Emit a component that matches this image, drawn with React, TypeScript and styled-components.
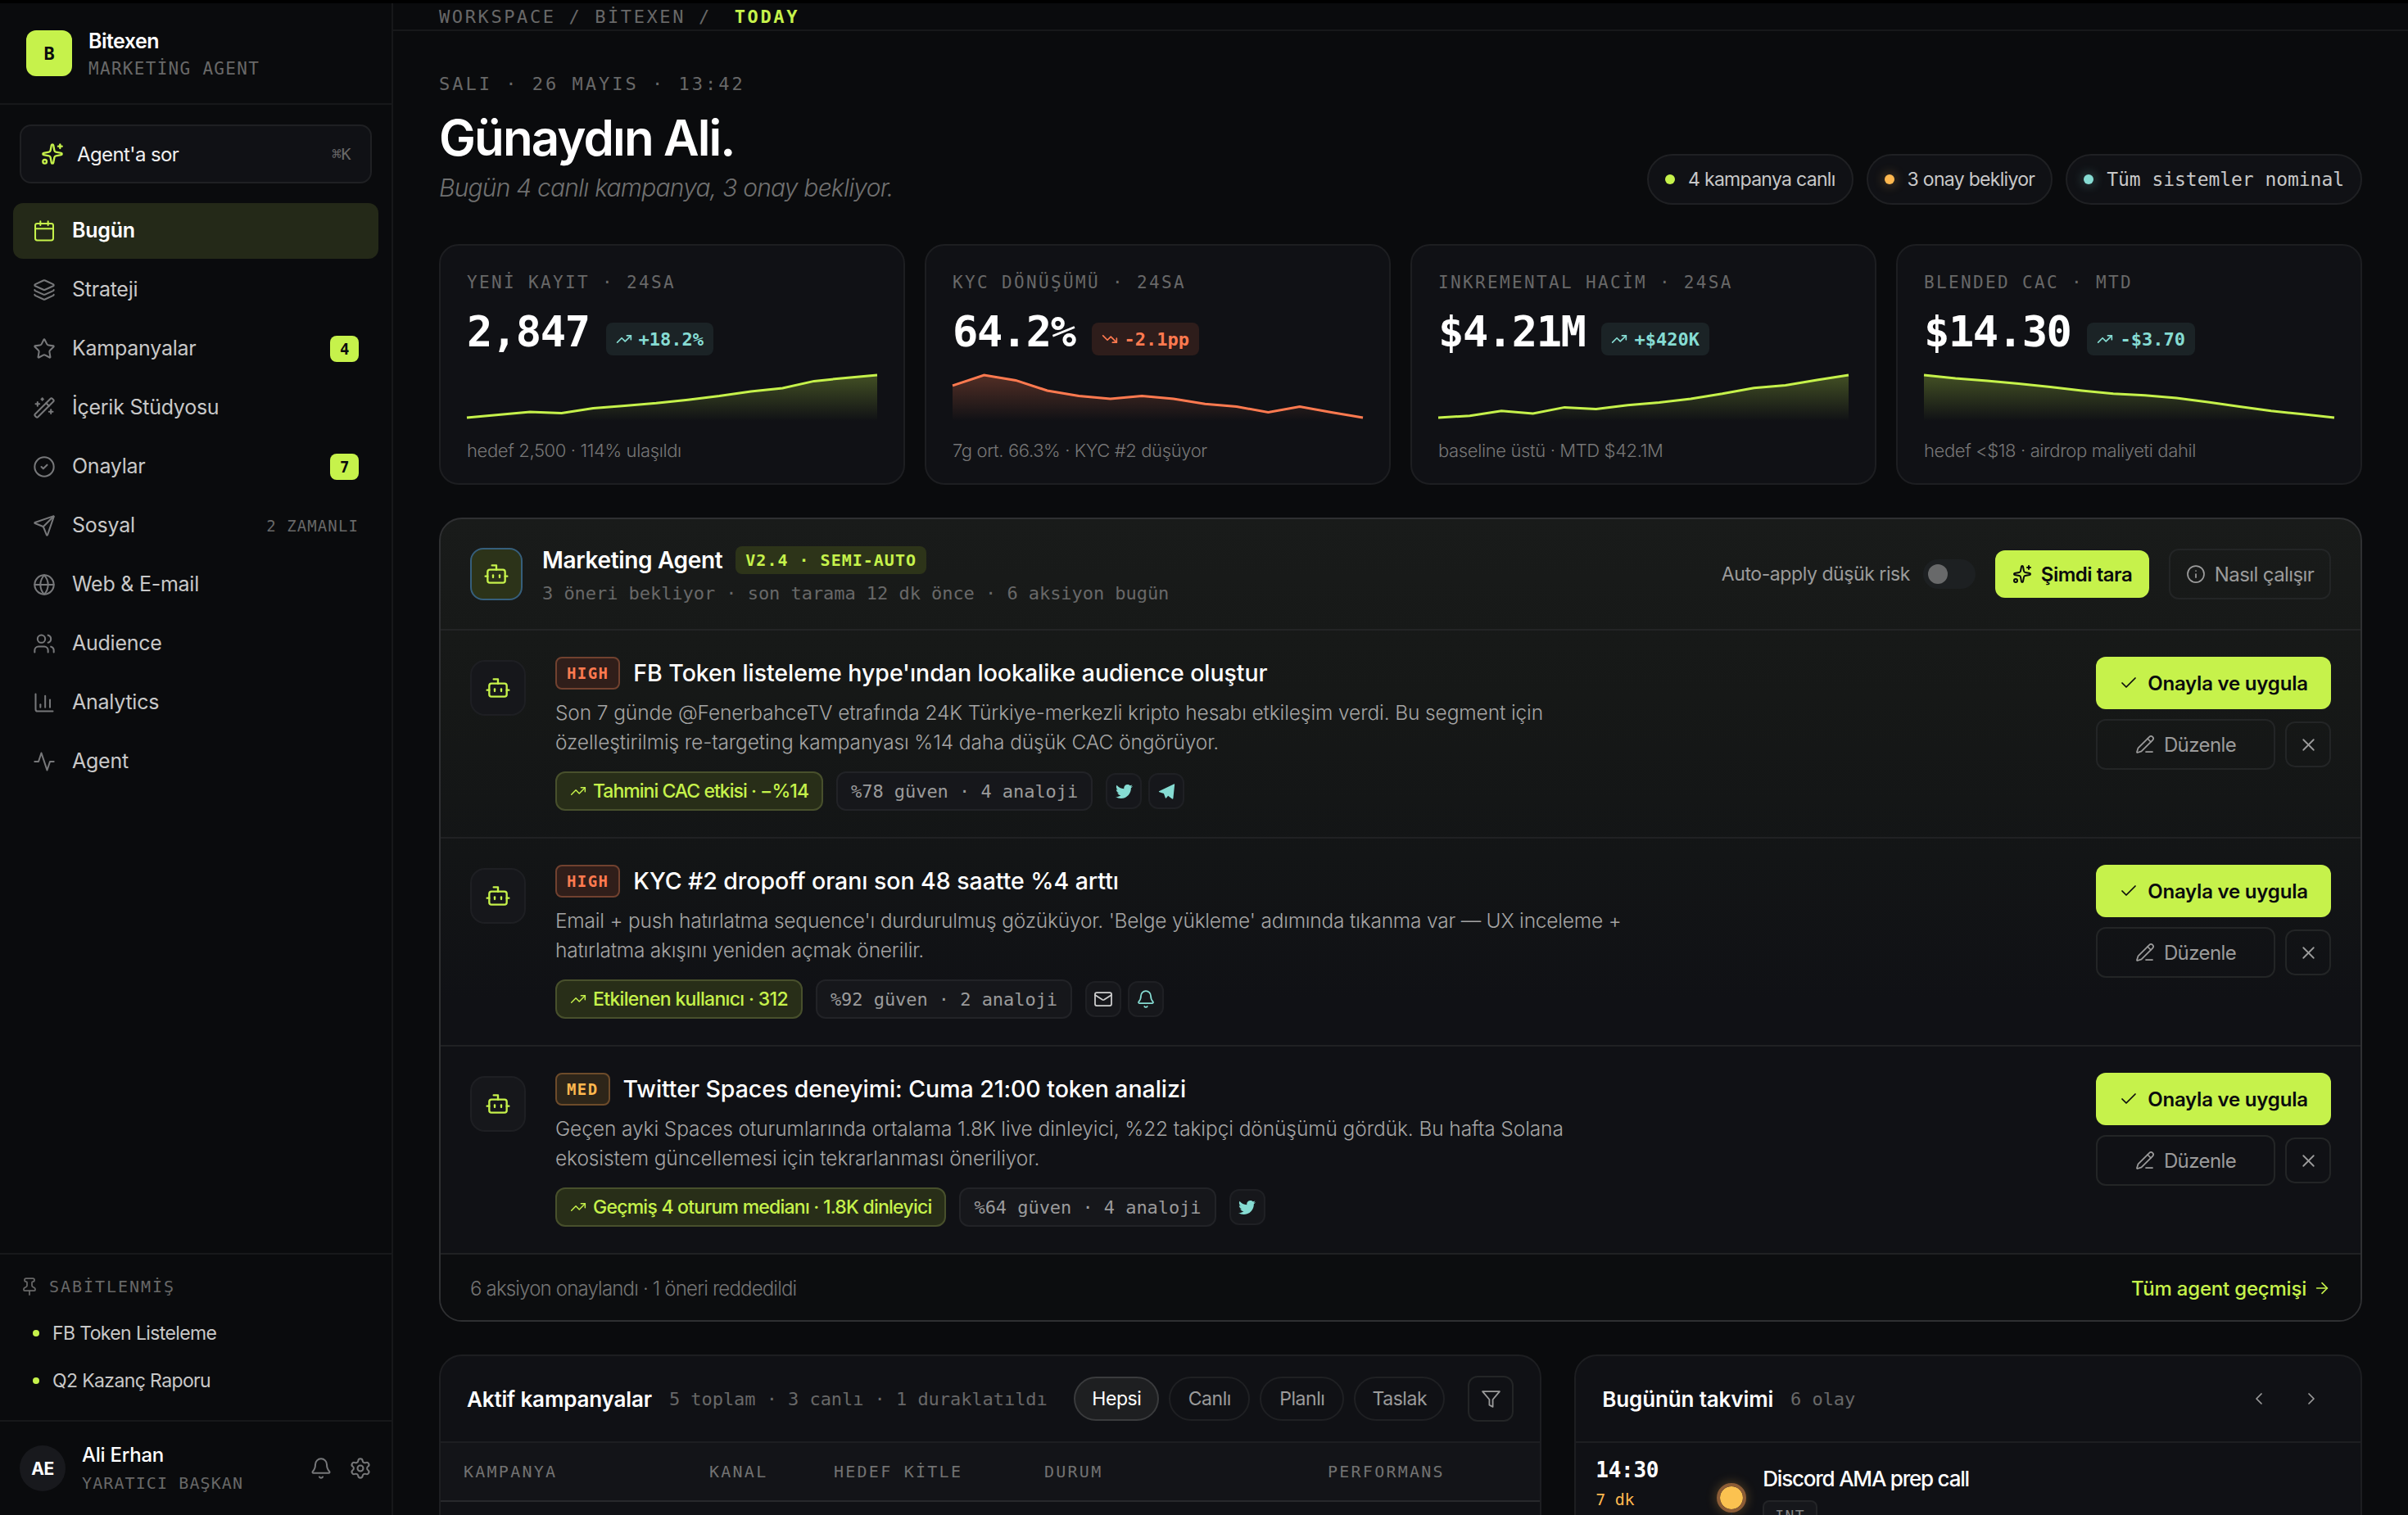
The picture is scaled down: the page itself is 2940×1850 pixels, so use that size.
import React from 'react';
import styled, { createGlobalStyle, css } from 'styled-components';
import {
  ArrowRight,
  Bell,
  Bot,
  ChartColumn,
  Check,
  ChevronLeft,
  ChevronRight,
  CircleCheck,
  Globe,
  Info,
  Layers,
  Mail,
  PencilLine,
  Pin,
  Send,
  Settings,
  Sparkles,
  Star,
  TrendingDown,
  TrendingUp,
  Users,
  WandSparkles,
  X,
} from 'lucide-react';
import { FaTwitter } from 'react-icons/fa';

const c = {
  bg: '#0a0b0d',
  surface: '#101115',
  raised: '#16171b',
  line: '#1d1e21',
  lineStrong: '#2f3032',
  lime: '#c6f24b',
  teal: '#86dcd3',
  orange: '#ff7a50',
  amber: '#ffb84f',
  text: '#ffffff',
  text2: '#c8c8c8',
  text3: '#9b9b9b',
  text4: '#686868',
};

const sans = `Inter, 'Liberation Sans', sans-serif`;
const mono = `'DejaVu Sans Mono', 'Liberation Mono', monospace`;

const GlobalStyle = createGlobalStyle`
  * { box-sizing: border-box; }
  html, body { margin: 0; background: #000; }
  body {
    font-family: ${sans};
    color: ${c.text};
    font-size: 24px;
    overflow: hidden;
  }
  button { font: inherit; color: inherit; margin: 0; padding: 0; border: 0; background: none; }
  svg { display: block; flex: none; }
`;

/* ---------- shell ---------- */

const Shell = styled.div`
  display: flex;
  height: 1850px;
  border-top: 4px solid #000;
  background: ${c.bg};
  overflow: hidden;
`;

const Sidebar = styled.aside`
  display: flex;
  flex-direction: column;
  flex: none;
  width: 480px;
  border-right: 2px solid #17181a;
`;

const Brand = styled.div`
  display: flex;
  align-items: center;
  gap: 20px;
  height: 124px;
  padding: 0 32px;
  border-bottom: 2px solid #17181a;
`;

const Logo = styled.div`
  display: grid;
  place-items: center;
  width: 56px;
  height: 56px;
  border-radius: 12px;
  background: ${c.lime};
  color: #0a0b0d;
  font: 700 22px ${mono};
`;

const Stack = styled.div<{ $top?: number }>`
  display: flex;
  flex-direction: column;
  padding-top: ${p => p.$top ?? 0}px;
  white-space: nowrap;
`;

const BrandName = styled.div`
  font-size: 25px;
  font-weight: 600;
  line-height: 34px;
  letter-spacing: -0.02em;
`;

const Caption = styled.div<{ $size?: number; $ls?: number }>`
  font-family: ${mono};
  font-size: ${p => p.$size ?? 21}px;
  line-height: 34px;
  letter-spacing: ${p => p.$ls ?? 1.3}px;
  color: ${c.text4};
  white-space: nowrap;
`;

const AskButton = styled.button`
  display: flex;
  align-items: center;
  gap: 16px;
  height: 72px;
  margin: 24px 24px 24px;
  padding: 0 24px;
  border: 2px solid #1f2023;
  border-radius: 14px;
  background: ${c.surface};
  font-size: 24px;
  letter-spacing: -0.6px;
  color: #f0f0f0;

  svg { color: ${c.lime}; }
  kbd {
    margin-left: auto;
    font: 20px ${mono};
    color: ${c.text4};
  }
`;

const Nav = styled.nav`
  display: flex;
  flex-direction: column;
  gap: 4px;
  padding: 0 16px;
`;

const NavItem = styled.a<{ $active?: boolean }>`
  display: flex;
  align-items: center;
  gap: 20px;
  height: 68px;
  padding: 0 24px;
  border-radius: 12px;
  font-size: 25px;
  line-height: 30px;
  letter-spacing: -0.01em;
  color: ${c.text2};

  svg { color: #77787a; }

  ${p => p.$active && css`
    background: #242918;
    color: ${c.text};
    font-weight: 600;
    svg { color: ${c.lime}; }
  `}
`;

const NavLabel = styled.span`
  padding-bottom: 2px;
`;

const NavCount = styled.span`
  display: grid;
  place-items: center;
  width: 35px;
  height: 32px;
  margin-left: auto;
  border-radius: 8px;
  background: ${c.lime};
  color: #0a0b0d;
  font: 700 19px ${mono};
`;

const NavHint = styled.span`
  margin-left: auto;
  font: 19px ${mono};
  letter-spacing: 1.1px;
  color: ${c.text4};
`;

const Pinned = styled.div`
  margin-top: auto;
  padding: 24px 28px 20px;
  border-top: 2px solid #17181a;
`;

const PinnedTitle = styled.div`
  display: flex;
  align-items: center;
  gap: 12px;
  height: 30px;
  margin: 0 0 12px -4px;
  color: ${c.text4};
`;

const PinnedItem = styled.a`
  display: flex;
  align-items: center;
  gap: 16px;
  height: 58px;
  padding: 1px 0 0 12px;
  font-size: 23px;
  letter-spacing: -0.62px;
  color: ${c.text2};

  &::before {
    content: '';
    width: 8px;
    height: 8px;
    border-radius: 50%;
    background: ${c.lime};
  }
`;

const UserBar = styled.div`
  display: flex;
  align-items: center;
  height: 116px;
  padding: 0 24px;
  border-top: 2px solid #17181a;
`;

const Avatar = styled.div`
  display: grid;
  place-items: center;
  width: 56px;
  height: 56px;
  margin-right: 20px;
  border-radius: 50%;
  background: #18191d;
  font-size: 21px;
  font-weight: 700;
  letter-spacing: -0.02em;
`;

const UserName = styled.div`
  font-size: 24px;
  font-weight: 500;
  line-height: 34px;
  letter-spacing: -0.01em;
`;

const UserActions = styled.div`
  display: flex;
  gap: 20px;
  margin-left: auto;
  color: #77787a;
`;

/* ---------- main ---------- */

const Main = styled.main`
  flex: 1;
  min-width: 0;
`;

const Topbar = styled.div`
  display: flex;
  align-items: center;
  height: 34px;
  padding: 0 56px;
  border-bottom: 2px solid #17181a;
  font: 22px ${mono};
  letter-spacing: 2.6px;
  white-space: pre;
  color: ${c.text4};

  b {
    margin-left: 28px;
    color: ${c.lime};
  }
`;

const Content = styled.div`
  padding: 50px 56px 0;
`;

const Hero = styled.header`
  display: flex;
  align-items: flex-end;
  justify-content: space-between;
  height: 162px;
`;

const HeroDate = styled.div`
  font: 22px/30px ${mono};
  letter-spacing: 3px;
  color: ${c.text4};
`;

const Greeting = styled.h1`
  margin: 14px 0 4px;
  font-size: 60px;
  font-weight: 600;
  line-height: 72px;
  letter-spacing: -1.9px;
`;

const HeroSub = styled.div`
  font-size: 30px;
  font-style: italic;
  font-weight: 300;
  line-height: 42px;
  letter-spacing: -0.8px;
  color: #707070;
`;

const Pills = styled.div`
  display: flex;
  gap: 16px;
`;

const Pill = styled.div<{ $color: string; $mono?: boolean; $glow?: boolean }>`
  display: flex;
  align-items: center;
  gap: 16px;
  height: 62px;
  padding: 0 20px;
  border: 2px solid #1f2023;
  border-radius: 31px;
  background: ${c.surface};
  font-family: ${p => (p.$mono ? mono : sans)};
  font-size: 23px;
  letter-spacing: ${p => (p.$mono ? -0.05 : -0.7)}px;
  color: ${c.text2};
  white-space: nowrap;

  &::before {
    content: '';
    width: 12px;
    height: 12px;
    border-radius: 50%;
    background: ${p => p.$color};
    box-shadow: ${p => (p.$glow ? `0 0 14px 1px ${p.$color}55` : 'none')};
  }
`;

const KpiGrid = styled.section`
  display: grid;
  grid-template-columns: repeat(4, 1fr);
  gap: 24px;
  margin-top: 48px;
`;

const KpiCard = styled.article`
  height: 294px;
  padding: 32px 32px 0;
  border: 2px solid ${c.line};
  border-radius: 24px;
  background: ${c.surface};
`;

const KpiLabel = styled.div`
  padding-top: 1px;
  font: 21px/24px ${mono};
  letter-spacing: 2.35px;
  color: ${c.text4};
`;

const KpiRow = styled.div`
  display: flex;
  align-items: flex-end;
  gap: 20px;
  height: 58px;
  margin-top: 19px;
`;

const KpiValue = styled.div`
  font: 700 52px/58px ${mono};
  letter-spacing: -1.4px;
`;

const Delta = styled.div<{ $down?: boolean }>`
  display: flex;
  align-items: center;
  gap: 8px;
  height: 40px;
  padding: 0 12px;
  border-radius: 8px;
  background: ${p => (p.$down ? '#2e1d1b' : '#1b2326')};
  color: ${p => (p.$down ? c.orange : c.teal)};
  font: 700 22px ${mono};
`;

const SparkSvg = styled.svg`
  width: 100%;
  height: 60px;
  margin-top: 20px;
  overflow: visible;
`;

const KpiNote = styled.div`
  margin-top: 24px;
  font-size: 22px;
  font-weight: 300;
  line-height: 24px;
  letter-spacing: -0.37px;
  color: #777;
`;

/* ---------- agent panel ---------- */

const AgentPanel = styled.section`
  margin-top: 40px;
  border: 2px solid ${c.lineStrong};
  border-radius: 28px;
  background: linear-gradient(180deg, #191b1a 0%, #161817 22%, #131516 42%, ${c.surface} 60%);
  overflow: hidden;
`;

const AgentHead = styled.header`
  display: flex;
  align-items: center;
  height: 136px;
  padding: 0 36px;
  border-bottom: 2px solid #232425;
`;

const AgentMark = styled.div`
  display: grid;
  place-items: center;
  width: 64px;
  height: 64px;
  margin-right: 24px;
  border: 2px solid #365f7c;
  border-radius: 16px;
  background: #2c3319;
  color: ${c.lime};
`;

const AgentTitle = styled.div`
  display: flex;
  align-items: center;
  gap: 16px;
  height: 36px;
  font-size: 28px;
  font-weight: 600;
  letter-spacing: -0.33px;
`;

const Version = styled.span`
  display: flex;
  align-items: center;
  height: 34px;
  padding: 0 12px;
  border-radius: 8px;
  background: #2d3419;
  color: ${c.lime};
  font: 700 20px ${mono};
  letter-spacing: 1px;
`;

const AgentMeta = styled.div`
  margin-top: 5px;
  font: 22px/36px ${mono};
  letter-spacing: -0.05px;
  color: ${c.text4};
`;

const AgentTools = styled.div`
  display: flex;
  align-items: center;
  gap: 24px;
  margin-left: auto;
`;

const ToggleLabel = styled.label`
  display: flex;
  align-items: center;
  gap: 16px;
  font-size: 23px;
  letter-spacing: -0.43px;
  color: ${c.text3};
`;

const Toggle = styled.span`
  display: flex;
  align-items: center;
  width: 64px;
  height: 36px;
  padding: 0 6px;
  border-radius: 18px;
  background: #1d2022;

  &::before {
    content: '';
    width: 24px;
    height: 24px;
    border-radius: 50%;
    background: #68696a;
  }
`;

const Button = styled.button<{ $primary?: boolean; $w: number; $h: number; $ls?: number }>`
  display: flex;
  align-items: center;
  justify-content: center;
  gap: 11px;
  width: ${p => p.$w}px;
  height: ${p => p.$h}px;
  border-radius: 12px;
  border: 2px solid #232526;
  font-size: 24px;
  letter-spacing: ${p => p.$ls ?? -0.48}px;
  color: ${c.text3};
  white-space: nowrap;

  ${p => p.$primary && css`
    border: 0;
    background: ${c.lime};
    color: #0a0b0d;
    font-weight: 600;
  `}
`;

const Suggestion = styled.article`
  display: flex;
  align-items: flex-start;
  height: 254px;
  padding: 32px 36px 0;
  border-bottom: 2px solid #202123;
`;

const SuggestionMark = styled.div`
  display: grid;
  place-items: center;
  width: 68px;
  height: 68px;
  margin: 4px 36px 0 0;
  border: 2px solid #1e1f23;
  border-radius: 18px;
  background: ${c.raised};
  color: ${c.lime};
`;

const SuggestionHead = styled.div`
  display: flex;
  align-items: center;
  gap: 16px;
  height: 40px;
`;

const Priority = styled.span<{ $med?: boolean }>`
  display: flex;
  align-items: center;
  height: 40px;
  padding: 0 12px;
  border: 2px solid ${p => (p.$med ? '#6d4b2a' : '#71412f')};
  border-radius: 8px;
  background: ${p => (p.$med ? '#2d2519' : '#301e1a')};
  color: ${p => (p.$med ? c.amber : c.orange)};
  font: 700 19px ${mono};
  letter-spacing: 1.4px;
`;

const SuggestionTitle = styled.h3`
  margin: 0;
  padding-bottom: 2px;
  font-size: 28.5px;
  font-weight: 500;
  letter-spacing: -0.05px;
`;

const SuggestionText = styled.p<{ $ls?: number }>`
  margin: 10px 0 18px;
  font-size: 24.5px;
  font-weight: 300;
  line-height: 36px;
  letter-spacing: ${p => p.$ls ?? -0.12}px;
  color: #a4a4a4;
  white-space: pre-line;
`;

const Tags = styled.div`
  display: flex;
  align-items: center;
  gap: 16px;
`;

const Impact = styled.span<{ $ls: number }>`
  display: flex;
  align-items: center;
  gap: 8px;
  height: 48px;
  padding: 0 16px;
  border: 2px solid #48502c;
  border-radius: 12px;
  background: #282e18;
  color: ${c.lime};
  font-size: 23px;
  font-weight: 500;
  letter-spacing: ${p => p.$ls}px;
`;

const Confidence = styled.span`
  display: flex;
  align-items: center;
  height: 48px;
  padding: 0 16px;
  border: 2px solid #222327;
  border-radius: 12px;
  background: ${c.raised};
  color: ${c.text3};
  font: 22px ${mono};
  letter-spacing: -0.05px;
`;

const Channels = styled.span`
  display: flex;
  gap: 8px;
`;

const Channel = styled.span`
  display: grid;
  place-items: center;
  width: 44px;
  height: 44px;
  border: 2px solid #1f2024;
  border-radius: 12px;
  background: ${c.raised};
  color: ${c.teal};
`;

const Actions = styled.div`
  display: flex;
  flex-wrap: wrap;
  align-items: center;
  gap: 12px;
  width: 287px;
  margin-left: auto;
`;

const AgentFoot = styled.footer`
  display: flex;
  align-items: center;
  justify-content: space-between;
  height: 80px;
  padding: 2px 36px 0;
  background: #0c0d0f;
  font-size: 24px;
  font-weight: 300;
  letter-spacing: -0.82px;
  color: #747474;

  a {
    display: flex;
    align-items: center;
    gap: 8px;
    color: ${c.lime};
    font-weight: 500;
    letter-spacing: -0.2px;
  }
`;

/* ---------- bottom panels ---------- */

const Bottom = styled.section`
  display: grid;
  grid-template-columns: 1.4fr 1fr;
  gap: 40px;
  margin-top: 40px;
`;

const Panel = styled.div`
  height: 400px;
  border: 2px solid ${c.line};
  border-radius: 28px;
  background: ${c.surface};
  overflow: hidden;
`;

const PanelHead = styled.header`
  display: flex;
  align-items: center;
  height: 106px;
  padding: 0 32px;
  border-bottom: 2px solid ${c.line};
`;

const PanelTitle = styled.h2`
  margin: 0 21px 0 0;
  font-size: 26px;
  font-weight: 600;
  letter-spacing: -0.15px;
  white-space: nowrap;
`;

const PanelMeta = styled.span`
  font: 22px ${mono};
  letter-spacing: -0.05px;
  color: ${c.text4};
  white-space: nowrap;
`;

const Filters = styled.div`
  display: flex;
  align-items: center;
  gap: 12px;
  margin: 0 28px 0 auto;
`;

const FilterChip = styled.button<{ $active?: boolean; $w: number }>`
  width: ${p => p.$w}px;
  height: 54px;
  border: 2px solid ${p => (p.$active ? '#3a3b3d' : '#1f2023')};
  border-radius: 27px;
  background: ${p => (p.$active ? '#1e1f21' : 'transparent')};
  color: ${p => (p.$active ? c.text : c.text3)};
  font-size: 23px;
  letter-spacing: -0.02em;
`;

const IconButton = styled.button<{ $bordered?: boolean }>`
  display: grid;
  place-items: center;
  width: 56px;
  height: 56px;
  border: 2px solid ${p => (p.$bordered ? '#232526' : 'transparent')};
  border-radius: 12px;
  color: ${c.text3};
`;

const TableHead = styled.div`
  display: grid;
  grid-template-columns: 300px 152px 257px 346px 1fr;
  height: 72px;
  padding-left: 28px;
  border-bottom: 2px solid #28292c;
  background: #131418;
  font: 20px/70px ${mono};
  letter-spacing: 2.25px;
  color: #727272;
  white-space: nowrap;
`;

const CalendarNav = styled.div`
  display: flex;
  gap: 8px;
  margin-left: auto;
`;

const Event = styled.div`
  display: flex;
  padding: 16px 24px;
`;

const EventTime = styled.div`
  width: 152px;
  font: 700 26px/34px ${mono};
  letter-spacing: -0.3px;

  small {
    display: block;
    font-size: 20px;
    font-weight: 400;
    line-height: 38px;
    color: ${c.amber};
  }
`;

const EventRail = styled.div`
  display: flex;
  flex-direction: column;
  align-items: center;
  width: 28px;
  margin-right: 24px;
  padding-top: 33px;

  &::before {
    content: '';
    flex: none;
    width: 28px;
    height: 28px;
    border: 4px solid #8c5c36;
    border-radius: 50%;
    background: #fbc250;
    background-clip: padding-box;
    box-shadow: 0 0 14px rgba(255, 184, 79, 0.3);
  }
  &::after {
    content: '';
    width: 2px;
    height: 40px;
    background: #242528;
  }
`;

const EventTitle = styled.div`
  margin-top: 11px;
  font-size: 26px;
  font-weight: 500;
  line-height: 34px;
  letter-spacing: -1.22px;
`;

const EventTag = styled.span`
  display: flex;
  align-items: center;
  width: 67px;
  height: 36px;
  margin-top: 9px;
  padding: 0 13px;
  border: 2px solid #232427;
  border-radius: 8px;
  background: ${c.raised};
  font: 18px ${mono};
  letter-spacing: 1.4px;
  color: #828282;
`;

/* ---------- icons ---------- */

const stroke = {
  viewBox: '0 0 24 24',
  fill: 'none',
  stroke: 'currentColor',
  strokeWidth: 1.75,
  strokeLinecap: 'round' as const,
  strokeLinejoin: 'round' as const,
};

const CalendarIcon = () => (
  <svg {...stroke} width={28} height={28}>
    <rect x="2.6" y="4.2" width="18.8" height="17.6" rx="2" />
    <path d="M2.6 9.7h18.8M8 2v4M16 2v4" />
  </svg>
);

const PulseIcon = () => (
  <svg {...stroke} width={28} height={28}>
    <path d="M22 12h-4l-3 9L9 3l-3 9H2" />
  </svg>
);

const FunnelIcon = () => (
  <svg {...stroke} width={25} height={25}>
    <path d="M22 3H2l8 9.46V19l4 2v-8.54L22 3z" />
  </svg>
);

const PlaneIcon = () => (
  <svg viewBox="0 0 24 24" width={21} height={21} fill="currentColor">
    <path d="M21.9 1.6 1.6 11.3c-.8.4-.8 1.2.1 1.5l6.2 2 2.2 6.1c.2.6.8.7 1.2.2l2.6-3.1 5.6 4.3c.6.4 1.3.1 1.5-.6L23 2.5c.1-.8-.4-1.2-1.1-.9z" />
  </svg>
);

/* ---------- data ---------- */

const nav: { label: string; icon: React.ReactNode; count?: number; hint?: string; active?: boolean }[] = [
  { label: 'Bugün', icon: <CalendarIcon />, active: true },
  { label: 'Strateji', icon: <Layers size={28} strokeWidth={1.75} /> },
  { label: 'Kampanyalar', icon: <Star size={28} strokeWidth={1.75} />, count: 4 },
  { label: 'İçerik Stüdyosu', icon: <WandSparkles size={28} strokeWidth={1.75} /> },
  { label: 'Onaylar', icon: <CircleCheck size={28} strokeWidth={1.75} />, count: 7 },
  { label: 'Sosyal', icon: <Send size={28} strokeWidth={1.75} />, hint: '2 ZAMANLI' },
  { label: 'Web & E-mail', icon: <Globe size={28} strokeWidth={1.75} /> },
  { label: 'Audience', icon: <Users size={28} strokeWidth={1.75} /> },
  { label: 'Analytics', icon: <ChartColumn size={28} strokeWidth={1.75} /> },
  { label: 'Agent', icon: <PulseIcon /> },
];

const kpis = [
  {
    label: 'YENİ KAYIT · 24SA',
    value: '2,847',
    delta: '+18.2%',
    note: 'hedef 2,500 · 114% ulaşıldı',
    color: c.lime,
    points: [56, 52.5, 49, 50.5, 44.6, 41.4, 38.3, 34.3, 29.6, 24, 20, 11.4, 7.4, 4],
  },
  {
    label: 'KYC DÖNÜŞÜMÜ · 24SA',
    value: '64.2%',
    delta: '-2.1pp',
    down: true,
    note: '7g ort. 66.3% · KYC #2 düşüyor',
    color: c.orange,
    points: [16.8, 4, 10.4, 23, 29.6, 33, 29.6, 33, 39.3, 42.6, 49.4, 42.6, 49.4, 56],
  },
  {
    label: 'INKREMENTAL HACİM · 24SA',
    value: '$4.21M',
    delta: '+$420K',
    note: 'baseline üstü · MTD $42.1M',
    color: c.lime,
    points: [56, 53.7, 47.8, 51, 43.4, 45.4, 40.7, 37.5, 33, 26.8, 19.7, 16.5, 10, 4],
  },
  {
    label: 'BLENDED CAC · MTD',
    value: '$14.30',
    delta: '-$3.70',
    note: 'hedef <$18 · airdrop maliyeti dahil',
    color: c.lime,
    points: [4, 8, 11, 14.6, 18.5, 23, 26.8, 28.8, 32, 37, 42.6, 47.8, 51.7, 56],
  },
];

const suggestions = [
  {
    priority: 'HIGH',
    title: "FB Token listeleme hype'ından lookalike audience oluştur",
    text: 'Son 7 günde @FenerbahceTV etrafında 24K Türkiye-merkezli kripto hesabı etkileşim verdi. Bu segment için\nözelleştirilmiş re-targeting kampanyası %14 daha düşük CAC öngörüyor.',
    impact: 'Tahmini CAC etkisi · −%14',
    impactSpacing: -0.97,
    confidence: '%78 güven · 4 analoji',
    channels: ['twitter', 'telegram'],
  },
  {
    priority: 'HIGH',
    title: 'KYC #2 dropoff oranı son 48 saatte %4 arttı',
    text: "Email + push hatırlatma sequence'ı durdurulmuş gözüküyor. 'Belge yükleme' adımında tıkanma var — UX inceleme +\nhatırlatma akışını yeniden açmak önerilir.",
    textSpacing: -0.21,
    impact: 'Etkilenen kullanıcı · 312',
    impactSpacing: -0.66,
    confidence: '%92 güven · 2 analoji',
    channels: ['mail', 'push'],
  },
  {
    priority: 'MED',
    title: 'Twitter Spaces deneyimi: Cuma 21:00 token analizi',
    text: 'Geçen ayki Spaces oturumlarında ortalama 1.8K live dinleyici, %22 takipçi dönüşümü gördük. Bu hafta Solana\nekosistem güncellemesi için tekrarlanması öneriliyor.',
    textSpacing: -0.1,
    impact: 'Geçmiş 4 oturum medianı · 1.8K dinleyici',
    impactSpacing: -0.76,
    confidence: '%64 güven · 4 analoji',
    channels: ['twitter'],
  },
];

const channelIcons: Record<string, React.ReactNode> = {
  twitter: <FaTwitter size={21} />,
  telegram: <PlaneIcon />,
  mail: <Mail size={24} strokeWidth={1.75} color="#d0d0d0" />,
  push: <Bell size={24} strokeWidth={1.75} />,
};

const Sparkline = ({ points, color, id }: { points: number[]; color: string; id: string }) => {
  const step = 501 / (points.length - 1);
  const line = points.map((y, i) => `${i ? 'L' : 'M'}${(i * step).toFixed(1)} ${y}`).join(' ');
  return (
    <SparkSvg viewBox="0 0 501 60" preserveAspectRatio="none">
      <defs>
        <linearGradient id={id} x1="0" y1="0" x2="0" y2="1">
          <stop offset="0" stopColor={color} stopOpacity="0.28" />
          <stop offset="1" stopColor={color} stopOpacity="0" />
        </linearGradient>
      </defs>
      <path d={`${line} L501 60 L0 60 Z`} fill={`url(#${id})`} />
      <path d={line} fill="none" stroke={color} strokeWidth="3" />
    </SparkSvg>
  );
};

/* ---------- app ---------- */

const App: React.FC = () => (
  <>
    <GlobalStyle />
    <Shell>
      <Sidebar>
        <Brand>
          <Logo>B</Logo>
          <Stack $top={3}>
            <BrandName>Bitexen</BrandName>
            <Caption>MARKETİNG AGENT</Caption>
          </Stack>
        </Brand>
        <AskButton>
          <Sparkles size={28} strokeWidth={2} />
          Agent'a sor
          <kbd>⌘K</kbd>
        </AskButton>
        <Nav>
          {nav.map(item => (
            <NavItem key={item.label} $active={item.active}>
              {item.icon}
              <NavLabel>{item.label}</NavLabel>
              {item.count && <NavCount>{item.count}</NavCount>}
              {item.hint && <NavHint>{item.hint}</NavHint>}
            </NavItem>
          ))}
        </Nav>
        <Pinned>
          <PinnedTitle>
            <Pin size={24} strokeWidth={1.75} />
            <Caption $size={20} $ls={1.95}>SABİTLENMİŞ</Caption>
          </PinnedTitle>
          <PinnedItem>FB Token Listeleme</PinnedItem>
          <PinnedItem>Q2 Kazanç Raporu</PinnedItem>
        </Pinned>
        <UserBar>
          <Avatar>AE</Avatar>
          <Stack $top={2}>
            <UserName>Ali Erhan</UserName>
            <Caption $size={20} $ls={1.1}>YARATICI BAŞKAN</Caption>
          </Stack>
          <UserActions>
            <Bell size={28} strokeWidth={1.75} />
            <Settings size={28} strokeWidth={1.75} />
          </UserActions>
        </UserBar>
      </Sidebar>

      <Main>
        <Topbar>
          WORKSPACE / BİTEXEN /<b>TODAY</b>
        </Topbar>
        <Content>
          <Hero>
            <div>
              <HeroDate>SALI · 26 MAYIS · 13:42</HeroDate>
              <Greeting>Günaydın Ali.</Greeting>
              <HeroSub>Bugün 4 canlı kampanya, 3 onay bekliyor.</HeroSub>
            </div>
            <Pills>
              <Pill $color={c.lime}>4 kampanya canlı</Pill>
              <Pill $color={c.amber} $glow>3 onay bekliyor</Pill>
              <Pill $color={c.teal} $mono $glow>Tüm sistemler nominal</Pill>
            </Pills>
          </Hero>

          <KpiGrid>
            {kpis.map((k, i) => (
              <KpiCard key={k.label}>
                <KpiLabel>{k.label}</KpiLabel>
                <KpiRow>
                  <KpiValue>{k.value}</KpiValue>
                  <Delta $down={k.down}>
                    {k.down ? <TrendingDown size={20} /> : <TrendingUp size={20} />}
                    {k.delta}
                  </Delta>
                </KpiRow>
                <Sparkline id={`spark-${i}`} points={k.points} color={k.color} />
                <KpiNote>{k.note}</KpiNote>
              </KpiCard>
            ))}
          </KpiGrid>

          <AgentPanel>
            <AgentHead>
              <AgentMark>
                <Bot size={32} strokeWidth={1.75} />
              </AgentMark>
              <Stack $top={6}>
                <AgentTitle>
                  Marketing Agent
                  <Version>V2.4 · SEMI-AUTO</Version>
                </AgentTitle>
                <AgentMeta>3 öneri bekliyor · son tarama 12 dk önce · 6 aksiyon bugün</AgentMeta>
              </Stack>
              <AgentTools>
                <ToggleLabel>
                  Auto-apply düşük risk
                  <Toggle />
                </ToggleLabel>
                <Button $primary $w={188} $h={58}>
                  <Sparkles size={24} strokeWidth={2} />
                  Şimdi tara
                </Button>
                <Button $w={198} $h={62} $ls={-0.6}>
                  <Info size={24} strokeWidth={1.75} />
                  Nasıl çalışır
                </Button>
              </AgentTools>
            </AgentHead>

            {suggestions.map(s => (
              <Suggestion key={s.title}>
                <SuggestionMark>
                  <Bot size={32} strokeWidth={1.75} />
                </SuggestionMark>
                <Stack>
                  <SuggestionHead>
                    <Priority $med={s.priority === 'MED'}>{s.priority}</Priority>
                    <SuggestionTitle>{s.title}</SuggestionTitle>
                  </SuggestionHead>
                  <SuggestionText $ls={s.textSpacing}>{s.text}</SuggestionText>
                  <Tags>
                    <Impact $ls={s.impactSpacing}>
                      <TrendingUp size={20} strokeWidth={1.75} />
                      {s.impact}
                    </Impact>
                    <Confidence>{s.confidence}</Confidence>
                    <Channels>
                      {s.channels.map(ch => (
                        <Channel key={ch}>{channelIcons[ch]}</Channel>
                      ))}
                    </Channels>
                  </Tags>
                </Stack>
                <Actions>
                  <Button $primary $w={287} $h={64} $ls={-0.2}>
                    <Check size={24} strokeWidth={1.75} />
                    Onayla ve uygula
                  </Button>
                  <Button $w={219} $h={62} $ls={-0.6}>
                    <PencilLine size={24} strokeWidth={1.75} />
                    Düzenle
                  </Button>
                  <IconButton $bordered>
                    <X size={25} strokeWidth={1.75} />
                  </IconButton>
                </Actions>
              </Suggestion>
            ))}

            <AgentFoot>
              6 aksiyon onaylandı · 1 öneri reddedildi
              <a>
                Tüm agent geçmişi
                <ArrowRight size={22} strokeWidth={1.75} />
              </a>
            </AgentFoot>
          </AgentPanel>

          <Bottom>
            <Panel>
              <PanelHead>
                <PanelTitle>Aktif kampanyalar</PanelTitle>
                <PanelMeta>5 toplam · 3 canlı · 1 duraklatıldı</PanelMeta>
                <Filters>
                  <FilterChip $active $w={104}>Hepsi</FilterChip>
                  <FilterChip $w={99}>Canlı</FilterChip>
                  <FilterChip $w={103}>Planlı</FilterChip>
                  <FilterChip $w={111}>Taslak</FilterChip>
                </Filters>
                <IconButton $bordered>
                  <FunnelIcon />
                </IconButton>
              </PanelHead>
              <TableHead>
                <span>KAMPANYA</span>
                <span>KANAL</span>
                <span>HEDEF KİTLE</span>
                <span>DURUM</span>
                <span>PERFORMANS</span>
              </TableHead>
            </Panel>

            <Panel>
              <PanelHead>
                <PanelTitle>Bugünün takvimi</PanelTitle>
                <PanelMeta>6 olay</PanelMeta>
                <CalendarNav>
                  <IconButton>
                    <ChevronLeft size={24} strokeWidth={1.75} />
                  </IconButton>
                  <IconButton>
                    <ChevronRight size={24} strokeWidth={1.75} />
                  </IconButton>
                </CalendarNav>
              </PanelHead>
              <Event>
                <EventTime>
                  14:30
                  <small>7 dk</small>
                </EventTime>
                <EventRail />
                <div>
                  <EventTitle>Discord AMA prep call</EventTitle>
                  <EventTag>INT</EventTag>
                </div>
              </Event>
            </Panel>
          </Bottom>
        </Content>
      </Main>
    </Shell>
  </>
);

export default App;
